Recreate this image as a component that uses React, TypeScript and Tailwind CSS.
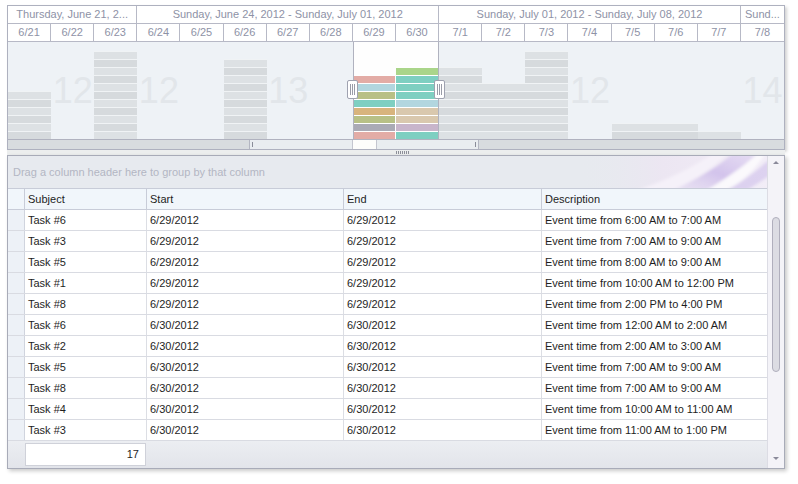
import React from 'react';

// Timeline (overview chart) above a grid of events.
const days = ['6/21', '6/22', '6/23', '6/24', '6/25', '6/26', '6/27', '6/28', '6/29', '6/30', '7/1', '7/2', '7/3', '7/4', '7/5', '7/6', '7/7', '7/8'];
const grayCounts = [6, 0, 11, 0, 0, 10, 0, 0, 0, 0, 9, 7, 11, 0, 2, 2, 1, 0];
const watermarks: Record<number, string> = { 1: '12', 3: '12', 6: '13', 13: '12', 17: '14' };
const colored: Record<number, string[]> = {
  8: ['#e3aca6', '#b2d6df', '#b8c086', '#7ecfc1', '#d8b47d', '#b8c086', '#aaaab5', '#e3aca6'],
  9: ['#aad58a', '#7ecfc1', '#7ecfc1', '#7ecfc1', '#b2d6df', '#d9c8ae', '#d9c8ae', '#c8b5cb', '#7ecfc1'],
};

const rows = [
  ['Task #6', '6/29/2012', 'Event time from 6:00 AM to 7:00 AM'],
  ['Task #3', '6/29/2012', 'Event time from 7:00 AM to 9:00 AM'],
  ['Task #5', '6/29/2012', 'Event time from 8:00 AM to 9:00 AM'],
  ['Task #1', '6/29/2012', 'Event time from 10:00 AM to 12:00 PM'],
  ['Task #8', '6/29/2012', 'Event time from 2:00 PM to 4:00 PM'],
  ['Task #6', '6/30/2012', 'Event time from 12:00 AM to 2:00 AM'],
  ['Task #2', '6/30/2012', 'Event time from 2:00 AM to 3:00 AM'],
  ['Task #5', '6/30/2012', 'Event time from 7:00 AM to 9:00 AM'],
  ['Task #8', '6/30/2012', 'Event time from 7:00 AM to 9:00 AM'],
  ['Task #4', '6/30/2012', 'Event time from 10:00 AM to 11:00 AM'],
  ['Task #3', '6/30/2012', 'Event time from 11:00 AM to 1:00 PM'],
];

function Handle({ left }: { left: number }) {
  return (
    <div
      className="absolute top-[38px] flex h-[19px] w-[11px] items-center justify-center gap-[1px] rounded-[2px] border border-[#9fa2b0] bg-white"
      style={{ left }}
    >
      <span className="h-[11px] w-[1px] bg-[#9a9ca8]" />
      <span className="h-[11px] w-[1px] bg-[#9a9ca8]" />
      <span className="h-[11px] w-[1px] bg-[#9a9ca8]" />
    </div>
  );
}

function Timeline() {
  return (
    <div className="w-[778px] border border-[#aeb1bf] bg-white shadow-[2px_2px_3px_rgba(0,0,0,0.18)]">
      <div className="grid h-[18px] grid-cols-18 border-b border-[#b7b9c6] text-[#8e92a6]">
        <div className="col-span-3 truncate border-r border-[#b7b9c6] px-1 text-center leading-[17px]">Thursday, June 21, 2...</div>
        <div className="col-span-7 truncate border-r border-[#b7b9c6] text-center leading-[17px]">Sunday, June 24, 2012 - Sunday, July 01, 2012</div>
        <div className="col-span-7 truncate border-r border-[#b7b9c6] text-center leading-[17px]">Sunday, July 01, 2012 - Sunday, July 08, 2012</div>
        <div className="col-span-1 truncate px-[2px] text-center leading-[17px]">Sund...</div>
      </div>
      <div className="grid h-[18px] grid-cols-18 border-b border-[#b7b9c6] text-[#8e92a6]">
        {days.map((d, i) => (
          <div key={d} className={`text-center leading-[17px] ${i < 17 ? 'border-r border-[#b7b9c6]' : ''}`}>{d}</div>
        ))}
      </div>
      <div className="relative grid h-[98px] grid-cols-18 border-b border-[#b0b2bf] bg-[#eef2f6]">
        {days.map((d, i) => {
          const segs = colored[i] ?? Array.from({ length: grayCounts[i] }, (_, k) => (k % 2 ? '#d6dadd' : '#dde1e4'));
          const sel = i === 8 || i === 9;
          return (
            <div
              key={d}
              className={`relative flex flex-col justify-end ${sel ? 'bg-[#fefefe]' : ''} ${i === 8 ? 'border-l border-[#b0b2bf]' : ''} ${i === 9 ? 'border-r border-[#b0b2bf]' : ''}`}
            >
              {watermarks[i] && (
                <div className="absolute inset-0 flex items-center justify-center text-[36px] text-[#e2e6ea]">
                  {watermarks[i]}
                </div>
              )}
              {segs.map((c, k) => (
                <div key={k} className={`h-[8px] border-t ${sel ? 'border-white' : 'border-[#f0f3f5]'} ${i === 8 ? 'mr-[1px]' : ''}`} style={{ backgroundColor: c }} />
              ))}
            </div>
          );
        })}
        <Handle left={339} />
        <Handle left={426} />
      </div>
      <div className="flex h-[9px] bg-[#d8dcdf]">
        <div className="w-[241px]" />
        <div className="flex w-[230px] border-x border-[#b3b6c2] bg-[#e9edf0]">
          <div className="flex w-[102px] items-center pl-[2px]">
            <span className="h-[5px] w-[1px] bg-[#8a8d99]" />
          </div>
          <div className="w-[25px] border-x border-[#c4c6cf] bg-[#fdfdfb]" />
          <div className="flex flex-1 items-center justify-end pr-[2px]">
            <span className="h-[5px] w-[1px] bg-[#8a8d99]" />
          </div>
        </div>
      </div>
    </div>
  );
}

function Splitter() {
  return (
    <div className="flex h-[5px] w-[778px] items-center justify-center gap-[1px] bg-[#eceeee] pl-[12px]">
      {Array.from({ length: 7 }).map((_, i) => (
        <span key={i} className="h-[3px] w-[1px] bg-[#8d8f99]" />
      ))}
    </div>
  );
}

const cols = ['w-[122px]', 'w-[197px]', 'w-[198px]', 'w-[225px]'];

function Swoosh() {
  return (
    <svg className="absolute right-0 top-0" width="190" height="32" viewBox="0 0 190 32">
      <defs>
        <linearGradient id="bgw" x1="0" x2="1" y1="0" y2="0">
          <stop offset="0" stopColor="#e7eaef" stopOpacity="0" />
          <stop offset="0.45" stopColor="#ece6f2" />
          <stop offset="1" stopColor="#f2edf7" />
        </linearGradient>
        <linearGradient id="sw" x1="0" x2="1" y1="1" y2="0">
          <stop offset="0" stopColor="#d9cdee" stopOpacity="0.3" />
          <stop offset="0.5" stopColor="#c6b2e7" />
          <stop offset="1" stopColor="#d9ccf0" stopOpacity="0.7" />
        </linearGradient>
        <filter id="soft" x="-10%" y="-50%" width="120%" height="200%">
          <feGaussianBlur stdDeviation="1.4" />
        </filter>
      </defs>
      <rect x="0" y="0" width="190" height="32" fill="url(#bgw)" />
      <g filter="url(#soft)">
        <path d="M60 34 C 90 24, 115 12, 135 -2 L 150 -2 C 135 12, 118 24, 100 34 Z" fill="#f6f2fa" opacity="0.9" />
        <path d="M95 34 C 118 24, 140 12, 155 -2 L 180 -2 C 165 12, 145 24, 130 34 Z" fill="url(#sw)" opacity="0.7" />
        <path d="M130 34 C 148 24, 165 12, 180 -2 L 188 -2 C 178 14, 165 26, 150 34 Z" fill="#ffffff" opacity="0.7" />
        <path d="M150 34 C 165 26, 178 16, 192 4 L 192 20 C 183 26, 175 31, 170 34 Z" fill="#cfbfeb" opacity="0.6" />
      </g>
    </svg>
  );
}

function Grid() {
  return (
    <div className="flex w-[778px] border border-[#a8abb8] bg-white shadow-[2px_2px_4px_rgba(0,0,0,0.22)]">
      <div className="flex w-[759px] flex-col">
        <div className="relative h-[32px] overflow-hidden bg-[#e7eaef]">
          <Swoosh />
          <div className="relative pl-[5px] leading-[32px] text-[#b3b6c3]">Drag a column header here to group by that column</div>
        </div>
        <div className="flex h-[22px] border-y border-[#c8ccd8] bg-[#f1f6fb] text-[#1e1e1e]">
          <div className="w-[17px] border-r border-[#c8ccd8]" />
          {['Subject', 'Start', 'End', 'Description'].map((h, i) => (
            <div key={h} className={`${cols[i]} ${i < 3 ? 'border-r border-[#c8ccd8]' : ''} pl-[3px] leading-[20px]`}>{h}</div>
          ))}
        </div>
        {rows.map((r, idx) => (
          <div key={idx} className="flex h-[21px] border-b border-[#d9dbe2] text-[#1e1e1e]">
            <div className="w-[17px] border-r border-[#d0d4de] bg-[#edf1f7]" />
            {[r[0], r[1], r[1], r[2]].map((c, i) => (
              <div key={i} className={`${cols[i]} ${i < 3 ? 'border-r border-[#dcdee4]' : ''} pl-[3px] leading-[20px]`}>{c}</div>
            ))}
          </div>
        ))}
        <div className="h-[27px] bg-gradient-to-b from-[#eceef2] to-[#e2e4ea] pl-[17px] pt-[2px]">
          <div className="h-[23px] w-[121px] border border-[#cfd1d9] bg-white pr-[6px] text-right leading-[21px] text-[#1e1e1e]">17</div>
        </div>
      </div>
      <div className="flex w-[17px] flex-col items-center border-l border-[#dcdce4] bg-[#f4f3f8]">
        <div className="mt-[5px] h-0 w-0 border-x-[3px] border-b-[3px] border-x-transparent border-b-[#8a8a9a]" />
        <div className="mt-[53px] h-[155px] w-[8px] rounded-[4px] border border-[#b0afbd] bg-[#dcdce3]" />
        <div className="flex-1" />
        <div className="mb-[8px] h-0 w-0 border-x-[3px] border-t-[3px] border-x-transparent border-t-[#8a8a9a]" />
      </div>
    </div>
  );
}

export default function App() {
  return (
    <div className="h-[484px] w-[798px] bg-white pl-[7px] pt-[5px] font-['Liberation_Sans',sans-serif] text-[11px]">
      <Timeline />
      <Splitter />
      <Grid />
    </div>
  );
}
